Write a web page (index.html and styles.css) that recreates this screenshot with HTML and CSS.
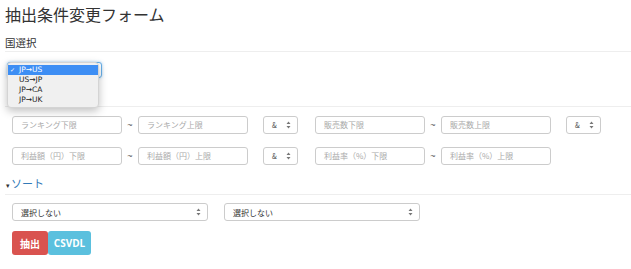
FILE: index.html
```html
<!DOCTYPE html>
<html lang="ja">
<head>
    <meta charset="UTF-8">
    <title>抽出条件変更フォーム</title>
    <link rel="stylesheet" href="styles.css">
</head>
<body>
    <div class="page">
        <h3 class="title">抽出条件変更フォーム</h3>

        <!-- 国選択 -->
        <div class="section-label">国選択</div>
        <hr>
        <div class="country-row">
            <div class="select-box country-select">
                <span class="covered">JP→US</span>
                <svg class="arrows" width="5" height="8" viewBox="0 0 5 8"><path d="M0.5 3 L2.5 0.5 L4.5 3 Z M0.5 5 L2.5 7.5 L4.5 5 Z" fill="#555"/></svg>
            </div>
            <ul class="dropdown">
                <li class="selected"><span class="check">✓</span><span>JP→US</span></li>
                <li><span class="check"></span><span>US→JP</span></li>
                <li><span class="check"></span><span>JP→CA</span></li>
                <li><span class="check"></span><span>JP→UK</span></li>
            </ul>
        </div>
        <hr>

        <!-- 条件 -->
        <div class="filter-row">
            <div class="range">
                <div class="input">ランキング下限</div>
                <span class="tilde">~</span>
                <div class="input">ランキング上限</div>
            </div>
            <div class="select-box op-select">
                <span>&amp;</span>
                <svg class="arrows" width="5" height="8" viewBox="0 0 5 8"><path d="M0.5 3 L2.5 0.5 L4.5 3 Z M0.5 5 L2.5 7.5 L4.5 5 Z" fill="#777"/></svg>
            </div>
            <div class="range">
                <div class="input">販売数下限</div>
                <span class="tilde">~</span>
                <div class="input">販売数上限</div>
            </div>
            <div class="select-box op-select">
                <span>&amp;</span>
                <svg class="arrows" width="5" height="8" viewBox="0 0 5 8"><path d="M0.5 3 L2.5 0.5 L4.5 3 Z M0.5 5 L2.5 7.5 L4.5 5 Z" fill="#777"/></svg>
            </div>
        </div>
        <div class="filter-row">
            <div class="range">
                <div class="input">利益額（円）下限</div>
                <span class="tilde">~</span>
                <div class="input">利益額（円）上限</div>
            </div>
            <div class="select-box op-select">
                <span>&amp;</span>
                <svg class="arrows" width="5" height="8" viewBox="0 0 5 8"><path d="M0.5 3 L2.5 0.5 L4.5 3 Z M0.5 5 L2.5 7.5 L4.5 5 Z" fill="#777"/></svg>
            </div>
            <div class="range">
                <div class="input">利益率（%）下限</div>
                <span class="tilde">~</span>
                <div class="input">利益率（%）上限</div>
            </div>
        </div>

        <!-- ソート -->
        <a class="sort-toggle" href="#"><span class="caret">▾</span>ソート</a>
        <hr>
        <div class="sort-row">
            <div class="select-box sort-select">
                <span>選択しない</span>
                <svg class="arrows" width="5" height="8" viewBox="0 0 5 8"><path d="M0.5 3 L2.5 0.5 L4.5 3 Z M0.5 5 L2.5 7.5 L4.5 5 Z" fill="#777"/></svg>
            </div>
            <div class="select-box sort-select">
                <span>選択しない</span>
                <svg class="arrows" width="5" height="8" viewBox="0 0 5 8"><path d="M0.5 3 L2.5 0.5 L4.5 3 Z M0.5 5 L2.5 7.5 L4.5 5 Z" fill="#777"/></svg>
            </div>
        </div>

        <div class="buttons">
            <button class="btn btn-danger">抽出</button>
            <button class="btn btn-info">CSVDL</button>
        </div>
    </div>
</body>
</html>
```

FILE: styles.css
```css
/* General */
body {
    margin: 0;
    padding: 0;
    background: #fff;
    color: #333;
    font-family: "Noto Sans CJK JP", "Liberation Sans", sans-serif;
}

.page {
    padding: 3px 0 0 5px;
}

.title {
    margin: 0;
    font-size: 16px;
    font-weight: normal;
    line-height: 22px;
    color: #333;
}

.section-label {
    margin-top: 12px;
    font-size: 10.5px;
    line-height: 12px;
}

hr {
    margin: 2px 0 0;
    border: 0;
    border-top: 1px solid #eee;
}

/* Country select */
.country-row {
    position: relative;
    height: 52px;
    padding: 10px 0 0 2px;
    box-sizing: border-box;
}

.select-box {
    display: flex;
    justify-content: space-between;
    align-items: center;
    box-sizing: border-box;
    height: 18px;
    padding: 0 6px 0 8px;
    border: 1px solid #ccc;
    border-radius: 3px;
    background: #fff;
    font-size: 8px;
    color: #555;
}

.country-select {
    width: 95px;
    height: 16px;
    border-color: #66afe9;
    box-shadow: 0 0 3px rgba(102, 175, 233, 0.6);
}

/* hidden under the open menu */
.covered {
    visibility: hidden;
}

.dropdown {
    position: absolute;
    top: 10px;
    left: 2px;
    width: 90px;
    margin: 0;
    padding: 2px 0;
    list-style: none;
    background: #f0f0f0;
    border: 1px solid #d4d4d4;
    border-radius: 4px;
    box-shadow: 0 3px 8px rgba(0, 0, 0, 0.25);
    font-family: "DejaVu Sans", sans-serif;
    font-size: 7.5px;
    color: #222;
}

.dropdown li {
    display: flex;
    align-items: center;
    height: 10px;
    line-height: 10px;
    padding-left: 2px;
}

.dropdown li.selected {
    background: #3d8ef4;
    color: #fff;
}

.dropdown .check {
    width: 9px;
    font-size: 6px;
}

/* Filters */
.filter-row {
    display: flex;
    align-items: center;
    margin-top: 9px;
    padding-left: 7px;
}

.filter-row + .filter-row {
    margin-top: 13px;
}

.range {
    display: flex;
    align-items: center;
}

.input {
    box-sizing: border-box;
    width: 110px;
    height: 18px;
    line-height: 16px;
    padding-left: 8px;
    border: 1px solid #ccc;
    border-radius: 3px;
    font-size: 8px;
    color: #aaa;
}

.tilde {
    width: 16px;
    text-align: center;
    font-family: "Liberation Sans", sans-serif;
    font-size: 9px;
    color: #555;
}

.op-select {
    width: 35px;
    margin: 0 17px 0 15px;
    font-size: 7px;
}

/* Sort */
.sort-toggle {
    display: block;
    margin-top: 12px;
    font-size: 11px;
    line-height: 12px;
    color: #337ab7;
    text-decoration: none;
}

.caret {
    font-size: 7px;
    color: #333;
    margin: 0 1px 0 1px;
}

.sort-toggle + hr {
    margin-top: 3px;
}

.sort-row {
    display: flex;
    gap: 16px;
    margin-top: 8px;
    padding-left: 7px;
}

.sort-select {
    width: 196px;
    color: #333;
}

/* Buttons */
.buttons {
    display: flex;
    margin-top: 10px;
    padding-left: 7px;
}

.btn {
    height: 24px;
    padding: 0 4px;
    border: 0;
    border-radius: 3px;
    color: #fff;
    font-weight: bold;
    font-size: 10px;
    font-family: "Open Sans", "Noto Sans CJK JP", sans-serif;
}

.btn-danger {
    width: 36px;
    background: #d9534f;
}

.btn-info {
    width: 43px;
    background: #5bc0de;
}
```
